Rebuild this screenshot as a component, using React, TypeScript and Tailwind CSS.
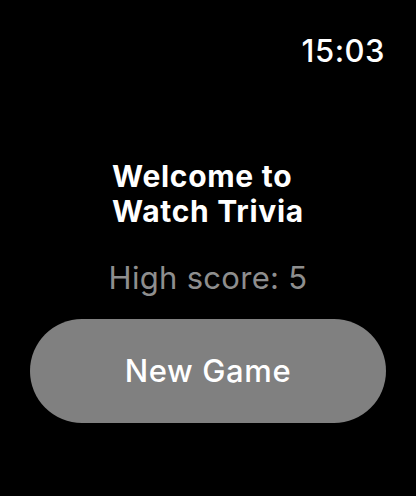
export default function App() {
  return (
    <div
      className="flex h-[496px] w-full flex-col bg-black text-white"
      style={{ fontFamily: "Inter, 'Liberation Sans', sans-serif" }}
    >
      <div className="flex justify-end pr-[31px] pt-[33px]">
        <span className="text-[31px] font-medium leading-[36px] tracking-[0.5px]">15:03</span>
      </div>

      <div className="mt-[90px] flex justify-center">
        <h1 className="text-[30px] font-bold leading-[35px] tracking-[0.7px]">
          Welcome to
          <br />
          Watch Trivia
        </h1>
      </div>

      <p className="mt-[31px] text-center text-[31px] leading-[36px] tracking-[0.3px] text-[#8e8e8e]">
        High score: 5
      </p>

      <button className="mx-[30px] mt-[23px] flex h-[104px] items-center justify-center rounded-full bg-[#808080] text-[31px] font-medium tracking-[0.6px] text-white">
        New Game
      </button>
    </div>
  );
}
